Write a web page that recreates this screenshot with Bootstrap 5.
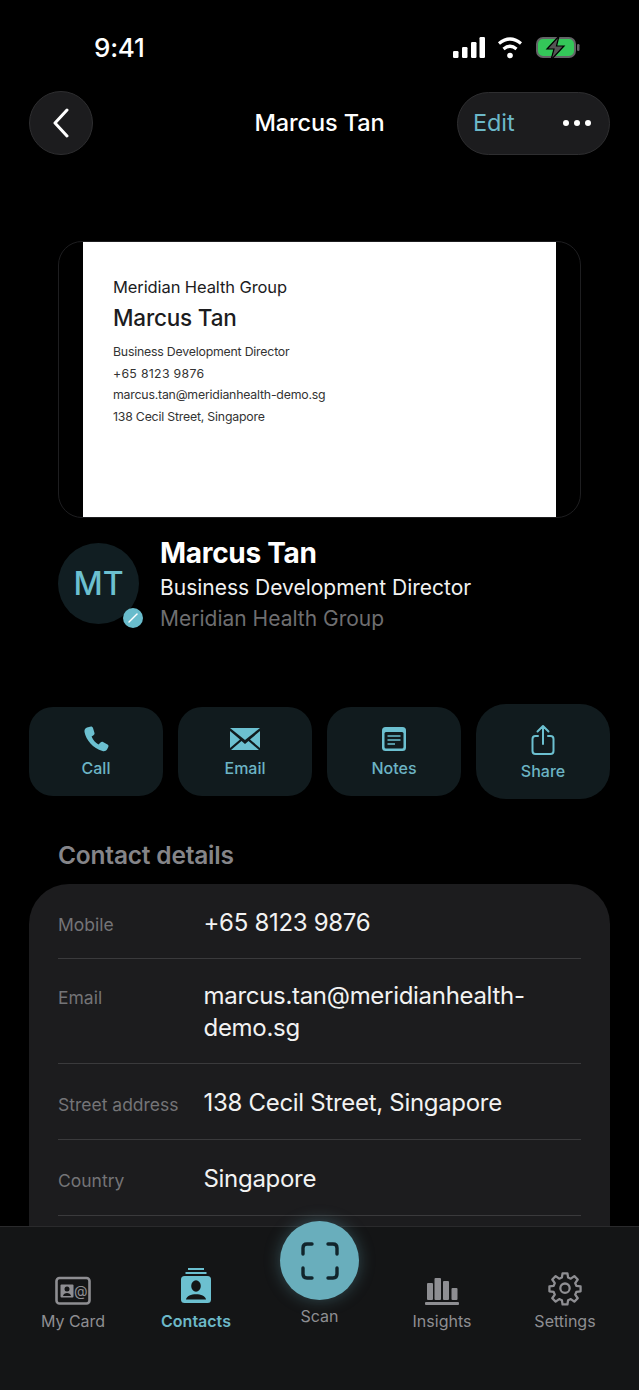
<!DOCTYPE html>
<html lang="en">
<head>
    <meta charset="UTF-8">
    <meta name="viewport" content="width=device-width, initial-scale=1.0">
    <title>Marcus Tan</title>
    <link href="https://cdn.jsdelivr.net/npm/bootstrap@5.3.0/dist/css/bootstrap.min.css" rel="stylesheet">
    <style>
        body { background: #000; font-family: Inter, "Liberation Sans", sans-serif; color: #fff; }
        .phone { position: relative; width: 639px; height: 1390px; overflow: hidden; background: #000; }

        .status-row { height: 91px; padding: 31px 58px 0 94px; align-items: flex-start; }
        .status-time { font-size: 26px; font-weight: 500; line-height: 34px; letter-spacing: -.2px; }
        .status-icons { margin-top: 5px; }

        .top-bar { height: 64px; padding: 0 29px; }
        .top-side { flex: 0 0 153px; }
        .back-btn { width: 64px; height: 64px; border-radius: 50%; background: #1c1c1e; border: 1px solid #2e2e30; }
        .top-title { font-size: 23.5px; font-weight: 500; letter-spacing: -.1px; }
        .edit-pill { height: 63px; border-radius: 32px; background: #1c1c1e; border: 1px solid #2e2e30; padding: 0 18px 0 15px; }
        .edit-link { font-size: 23.5px; color: #6cb8c8; letter-spacing: -.1px; }
        .dots { gap: 5px; }
        .dots i { display: block; width: 6px; height: 6px; border-radius: 50%; background: #fff; }

        .card-frame { margin: 86px 58px 0; height: 277px; border: 1px solid #1e1e20; border-radius: 24px; overflow: hidden; }
        .card-paper { width: 473px; height: 100%; background: #fff; color: #1c1c1e; padding: 33px 30px; margin-left: 24px; }
        .paper-org { font-size: 16.5px; line-height: 24px; letter-spacing: -.1px; }
        .paper-name { font-size: 22.5px; font-weight: 500; line-height: 30px; margin: 4px 0 8px; letter-spacing: -.2px; }
        .paper-line { font-size: 12.3px; line-height: 21.7px; letter-spacing: -.2px; color: #333; }
        .paper-line.digits { letter-spacing: .3px; }

        .profile-row { margin: 20px 58px 0; gap: 21px; }
        .avatar { position: relative; flex: 0 0 81px; width: 81px; height: 81px; border-radius: 50%; background: #111e22; color: #6cc0d0; font-size: 32px; font-weight: 500; margin-top: 5px; }
        .avatar-badge { position: absolute; right: -4px; bottom: -4px; width: 20px; height: 20px; border-radius: 50%; background: #69bccc; }
        .profile-name { font-size: 28px; font-weight: 700; line-height: 34px; letter-spacing: -.3px; margin-top: -2px; }
        .profile-role { font-size: 21px; line-height: 30px; margin-top: 3px; color: #f2f2f2; }
        .profile-org { font-size: 21px; line-height: 30px; margin-top: 1px; color: #6e6e70; }

        .action-row { margin: 70px 29px 0; gap: 15px; height: 95px; }
        .action-btn { flex: 0 0 134px; height: 89px; border-radius: 24px; background: #111b1e; color: #6cb4c4; font-size: 16px; font-weight: 500; padding-top: 18px; }
        .action-btn.big { height: 95px; border-radius: 30px; padding-top: 20px; }
        .action-btn span { margin-top: 4px; line-height: 22px; }

        .section-title { margin: 39px 58px 0; font-size: 24.5px; font-weight: 600; line-height: 34px; color: #858589; letter-spacing: -.2px; }
        .detail-box { margin: 12px 29px 0; padding: 0 29px; height: 500px; border-radius: 40px 40px 0 0; background: #1c1c1e; }
        .detail-item { display: flex; padding: 23px 0 18px; border-bottom: 1px solid #3a3a3c; }
        .detail-item.first-item { padding-bottom: 17px; }
        .detail-item.wrap-item { padding: 21px 0 19px; }
        .detail-label { flex: 0 0 145.5px; font-size: 17.5px; color: #747477; line-height: 32px; padding-top: 2px; }
        .detail-value { font-size: 24px; line-height: 32px; color: #f2f2f2; letter-spacing: -.3px; }

        .tab-bar { position: absolute; left: 0; right: 0; bottom: 0; height: 164px; background: #141516; border-top: 1px solid #2a2a2c; padding: 0 11.5px; align-items: flex-start; }
        .tab-item { flex: 0 0 123px; height: 100%; padding-top: 39px; font-size: 16px; color: #8e8e92; text-align: center; }
        .tab-item svg { height: 50px; }
        .tab-item span { display: block; line-height: 22px; margin-top: -6px; }
        .tab-item.active { color: #6cb8c8; font-weight: 600; }
        .scan-btn { position: absolute; left: 280px; top: -6px; width: 79px; height: 79px; border-radius: 50%; background: #69aebc; box-shadow: 0 0 16px rgba(105,174,188,.35); }
        .scan-label { position: absolute; left: 0; right: 0; top: 78px; font-size: 16px; color: #8e8e92; text-align: center; line-height: 22px; }
    </style>
</head>
<body>
    <div class="phone">
        <div class="status-row d-flex justify-content-between">
            <div class="status-time">9:41</div>
            <svg class="status-icons" width="128" height="24" viewBox="0 0 128 24">
                <g fill="#fff">
                    <rect x="0" y="15" width="5.500" height="7" rx="1.200"/>
                    <rect x="9" y="11" width="5.500" height="11" rx="1.200"/>
                    <rect x="18" y="6" width="5.500" height="16" rx="1.200"/>
                    <rect x="26.500" y="1" width="5.500" height="21" rx="1.200"/>
                    <circle cx="57" cy="19.500" r="2.800"/>
                </g>
                <g fill="none" stroke="#fff" stroke-width="3.200">
                    <path d="M46 7.500 Q57 -1.500 68 7.500"/>
                    <path d="M50.500 13 Q57 7.500 63.500 13"/>
                </g>
                <rect x="84" y="2" width="38" height="19" rx="6" fill="#34c759" stroke="#636366" stroke-width="2"/>
                <rect x="124" y="8" width="2.500" height="7" rx="1.200" fill="#636366"/>
                <path d="M106 0 L94 13 H101 L98 24 L111 10 H103.500 Z" fill="#555" stroke="#000" stroke-width="1.200"/>
            </svg>
        </div>

        <div class="top-bar d-flex justify-content-between align-items-center">
            <div class="top-side">
                <div class="back-btn d-flex align-items-center justify-content-center">
                    <svg width="20" height="30" viewBox="0 0 20 30"><path d="M16 2 L4 15 L16 28" fill="none" stroke="#fff" stroke-width="3" stroke-linecap="round" stroke-linejoin="round"/></svg>
                </div>
            </div>
            <div class="top-title">Marcus Tan</div>
            <div class="top-side edit-pill d-flex justify-content-between align-items-center">
                <div class="edit-link">Edit</div>
                <div class="dots d-flex"><i></i><i></i><i></i></div>
            </div>
        </div>

        <div class="card-frame">
            <div class="card-paper">
                <div class="paper-org">Meridian Health Group</div>
                <div class="paper-name">Marcus Tan</div>
                <div class="paper-line">Business Development Director</div>
                <div class="paper-line digits">+65 8123 9876</div>
                <div class="paper-line">marcus.tan@meridianhealth-demo.sg</div>
                <div class="paper-line">138 Cecil Street, Singapore</div>
            </div>
        </div>

        <div class="profile-row d-flex align-items-start">
            <div class="avatar d-flex align-items-center justify-content-center">
                MT
                <div class="avatar-badge d-flex align-items-center justify-content-center">
                    <svg width="12" height="12" viewBox="0 0 12 12"><path d="M2 10 L10 2" stroke="#fff" stroke-width="1.500" stroke-linecap="round"/></svg>
                </div>
            </div>
            <div>
                <div class="profile-name">Marcus Tan</div>
                <div class="profile-role">Business Development Director</div>
                <div class="profile-org">Meridian Health Group</div>
            </div>
        </div>

        <div class="action-row d-flex align-items-center">
            <div class="action-btn d-flex flex-column align-items-center">
                <svg width="28" height="28" viewBox="0 0 28 28"><path d="M5 2.500 L9 1.500 C10 1.500 10.500 2 11 3 L12.500 8 C12.700 9 12.300 9.600 11.500 10.200 L9.600 11.600 C11 15 13.500 18 16.500 19.500 L18.500 17.500 C19.200 16.800 20 16.600 21 17 L25.500 19.500 C26.500 20 26.700 21 26.300 22 L25 24.500 C24 26 22.500 26.500 20.500 26 C11 23.500 4 15 2.500 7 C2.200 5 3 3.200 5 2.500 Z" fill="#6cc0d0"/></svg>
                <span>Call</span>
            </div>
            <div class="action-btn d-flex flex-column align-items-center">
                <svg width="32" height="28" viewBox="0 0 32 28"><path d="M1 3 H31 L16 15 Z" fill="#6cc0d0"/><path d="M1 6 L11 14.500 L1 23 Z M31 6 L21 14.500 L31 23 Z M2 25 L12.500 16 L16 19 L19.500 16 L30 25 Z" fill="#6cc0d0"/></svg>
                <span>Email</span>
            </div>
            <div class="action-btn d-flex flex-column align-items-center">
                <svg width="28" height="28" viewBox="0 0 28 28"><rect x="2" y="2" width="24" height="24" rx="3.500" fill="#6cc0d0"/><rect x="4.500" y="7" width="19" height="16.500" rx="1.500" fill="#111b1e"/><path d="M7.500 11 H20.500 M7.500 15 H20.500 M7.500 19 H15" stroke="#6cc0d0" stroke-width="1.700"/></svg>
                <span>Notes</span>
            </div>
            <div class="action-btn big d-flex flex-column align-items-center">
                <svg width="28" height="32" viewBox="0 0 28 32"><path d="M9 12 H6.500 C4.500 12 3.500 13 3.500 15 V27 C3.500 29 4.500 30 6.500 30 H21.500 C23.500 30 24.500 29 24.500 27 V15 C24.500 13 23.500 12 21.500 12 H19 M14 20 V2.500 M8.500 7.500 L14 2 L19.500 7.500" fill="none" stroke="#6cc0d0" stroke-width="2" stroke-linecap="round" stroke-linejoin="round"/></svg>
                <span>Share</span>
            </div>
        </div>

        <div class="section-title">Contact details</div>
        <div class="detail-box">
            <div class="detail-item first-item"><div class="detail-label">Mobile</div><div class="detail-value">+65 8123 9876</div></div>
            <div class="detail-item wrap-item"><div class="detail-label">Email</div><div class="detail-value">marcus.tan@meridianhealth-<br>demo.sg</div></div>
            <div class="detail-item"><div class="detail-label">Street address</div><div class="detail-value">138 Cecil Street, Singapore</div></div>
            <div class="detail-item"><div class="detail-label">Country</div><div class="detail-value">Singapore</div></div>
        </div>

        <div class="tab-bar d-flex">
            <div class="tab-item">
                <svg width="36" height="50" viewBox="0 0 36 50"><rect x="1.500" y="12" width="33" height="25.500" rx="3" fill="none" stroke="#8e8e92" stroke-width="2.600"/><rect x="5.500" y="18.500" width="13" height="13" rx="1" fill="#8e8e92"/><circle cx="12" cy="23" r="2.500" fill="#141516"/><path d="M8 30 C8.500 26 15.500 26 16 30 Z" fill="#141516"/><text x="19" y="30" font-size="14" fill="#8e8e92" font-family="Inter, sans-serif">@</text></svg>
                <span>My Card</span>
            </div>
            <div class="tab-item active">
                <svg width="32" height="50" viewBox="0 0 32 50"><path d="M8 3 H24 M5.500 7 H26.500" stroke="#6cc0d0" stroke-width="2.200"/><rect x="1" y="10" width="30" height="27" rx="3.500" fill="#6cc0d0"/><ellipse cx="16" cy="20" rx="4.800" ry="5.800" fill="#141516"/><path d="M6 33.500 C7 26.500 25 26.500 26 33.500 Z" fill="#141516"/></svg>
                <span>Contacts</span>
            </div>
            <div class="tab-item">
                <div class="scan-label">Scan</div>
            </div>
            <div class="tab-item">
                <svg width="36" height="50" viewBox="0 0 36 50"><g fill="#8e8e92"><rect x="3" y="17" width="6" height="17" rx="1"/><rect x="10.500" y="12" width="6.500" height="22" rx="1"/><rect x="19" y="15" width="6" height="19" rx="1"/><rect x="27.500" y="22" width="6" height="12" rx="1"/><rect x="1" y="36" width="34" height="3" rx="1"/></g></svg>
                <span>Insights</span>
            </div>
            <div class="tab-item">
                <svg width="34" height="50" viewBox="0 0 24 35"><g transform="translate(0 3.500)"><path d="M10.300 1.500h3.400l.5 3 1.900.8 2.500-1.800 2.400 2.400-1.800 2.500.8 1.900 3 .5v3.400l-3 .5-.8 1.900 1.800 2.500-2.400 2.400-2.500-1.800-1.900.8-.5 3h-3.400l-.5-3-1.900-.8-2.500 1.800-2.400-2.400 1.800-2.500-.8-1.900-3-.5v-3.400l3-.5.8-1.900-1.800-2.500 2.400-2.400 2.500 1.800 1.900-.8z" fill="none" stroke="#8e8e92" stroke-width="1.600" stroke-linejoin="round"/><circle cx="12" cy="12" r="3.300" fill="none" stroke="#8e8e92" stroke-width="1.600"/></g></svg>
                <span>Settings</span>
            </div>
            <div class="scan-btn d-flex align-items-center justify-content-center">
                <svg width="38" height="38" viewBox="0 0 38 38"><path d="M11 2 H6 Q2 2 2 6 V12 M27 2 H32 Q36 2 36 6 V12 M11 36 H6 Q2 36 2 32 V26 M27 36 H32 Q36 36 36 32 V26" fill="none" stroke="#11252c" stroke-width="3.400" stroke-linecap="round"/></svg>
            </div>
        </div>
    </div>

    <script src="https://cdn.jsdelivr.net/npm/bootstrap@5.3.0/dist/js/bootstrap.bundle.min.js"></script>
</body>
</html>
